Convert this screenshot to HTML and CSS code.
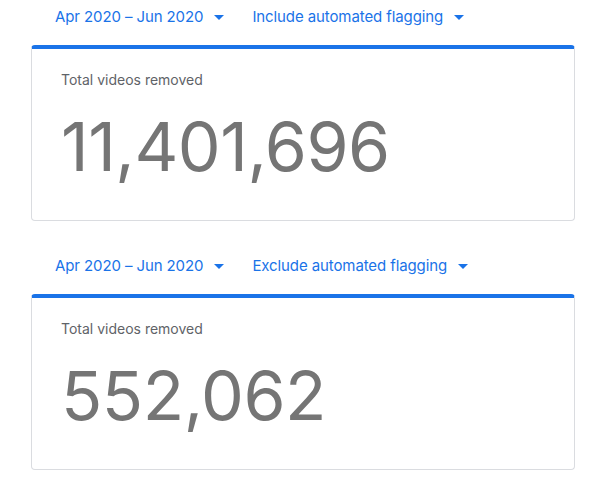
FILE: index.html
```html
<!DOCTYPE html>
<html>
<head>
<meta charset="utf-8">
<link rel="stylesheet" href="styles.css">
</head>
<body>
<div class="page">
  <section class="section">
    <div class="filters">
      <button class="dropdown">Apr 2020 – Jun 2020<span class="caret"></span></button>
      <button class="dropdown">Include automated flagging<span class="caret"></span></button>
    </div>
    <div class="card">
      <div class="label">Total videos removed</div>
      <div class="value">11,401,696</div>
    </div>
  </section>
  <section class="section">
    <div class="filters">
      <button class="dropdown">Apr 2020 – Jun 2020<span class="caret"></span></button>
      <button class="dropdown">Exclude automated flagging<span class="caret"></span></button>
    </div>
    <div class="card">
      <div class="label">Total videos removed</div>
      <div class="value">552,062</div>
    </div>
  </section>
</div>
</body>
</html>
```
FILE: styles.css
```css
html, body {
  margin: 0;
  padding: 0;
  background: #ffffff;
}
.page {
  width: 544px;
  margin-left: 31px;
  display: flex;
  flex-direction: column;
  gap: 28px;
}
.filters {
  height: 45px;
  box-sizing: border-box;
  padding: 7px 0 0 24px;
  display: flex;
  gap: 28px;
}
.dropdown {
  border: 0;
  background: none;
  padding: 0;
  font-family: Inter, Roboto, sans-serif;
  font-size: 15px;
  line-height: 20px;
  font-weight: 400;
  letter-spacing: -0.1px;
  color: #1a73e8;
  display: flex;
  align-items: center;
  height: 20px;
}
.caret {
  display: inline-block;
  width: 0;
  height: 0;
  margin-left: 11px;
  border-left: 5px solid transparent;
  border-right: 5px solid transparent;
  border-top: 5px solid #1a73e8;
}
.card {
  height: 176px;
  box-sizing: border-box;
  border: 1px solid #dadce0;
  border-top: 4px solid #1a73e8;
  border-radius: 4px;
  padding: 21px 29px 0 29px;
}
.label {
  font-family: Inter, Roboto, sans-serif;
  font-size: 14px;
  line-height: 20px;
  color: #5f6368;
}
.value {
  margin-top: 16px;
  font-family: Inter, Roboto, sans-serif;
  font-size: 68px;
  line-height: 80px;
  letter-spacing: -0.5px;
  color: #757575;
}
```
